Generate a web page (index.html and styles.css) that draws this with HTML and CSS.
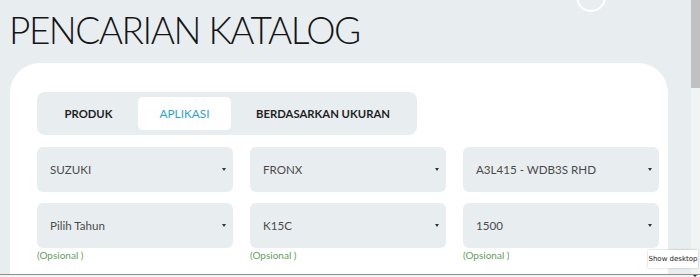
FILE: index.html
```html
<!DOCTYPE html>
<html lang="id">
<head>
<meta charset="utf-8">
<title>Pencarian Katalog</title>
<link rel="stylesheet" href="styles.css">
</head>
<body>
<div class="page">
  <span class="ring"></span>
  <h1 class="title">PENCARIAN KATALOG</h1>
  <div class="card">
    <div class="tabs">
      <div class="tab tab-1">PRODUK</div>
      <div class="tab tab-2 active">APLIKASI</div>
      <div class="tab tab-3">BERDASARKAN UKURAN</div>
    </div>
    <div class="grid">
      <div class="cell"><div class="select"><span>SUZUKI</span><i class="caret"></i></div></div>
      <div class="cell"><div class="select"><span>FRONX</span><i class="caret"></i></div></div>
      <div class="cell"><div class="select"><span>A3L415 - WDB3S RHD</span><i class="caret"></i></div></div>
      <div class="cell"><div class="select"><span>Pilih Tahun</span><i class="caret"></i></div><div class="hint">(Opsional )</div></div>
      <div class="cell"><div class="select"><span>K15C</span><i class="caret"></i></div><div class="hint">(Opsional )</div></div>
      <div class="cell"><div class="select"><span>1500</span><i class="caret"></i></div><div class="hint">(Opsional )</div></div>
    </div>
  </div>
  <div class="scrollbar"><div class="thumb"></div></div>
  <div class="taskbar"><i class="tb-arrow"></i></div>
  <div class="tooltip">Show desktop</div>
</div>
</body>
</html>
```
FILE: styles.css
```css
html, body {
  margin: 0;
  padding: 0;
  height: 100%;
  overflow: hidden;
  background: #e8eef0;
}
.page {
  position: relative;
  height: 277px;
  overflow: hidden;
  font-family: Lato, "Open Sans", sans-serif;
}
.ring {
  position: absolute;
  left: 576px;
  top: -18px;
  width: 26px;
  height: 26px;
  border: 2px solid #ffffff;
  border-radius: 50%;
}
.title {
  margin: 0 0 10px 9px;
  padding-top: 7px;
  height: 46px;
  line-height: 46px;
  font-size: 37px;
  font-weight: 300;
  color: #151515;
  letter-spacing: -1.5px;
}
.card {
  margin-left: 10px;
  width: 604px;
  height: 300px;
  background: #ffffff;
  border-radius: 30px;
  padding: 29px 27px;
}
.tabs {
  display: inline-flex;
  gap: 3px;
  padding: 5px;
  background: #e8eef0;
  border-radius: 8px;
}
.tab {
  height: 33px;
  line-height: 33px;
  text-align: center;
  font-size: 11.3px;
  font-weight: 700;
  color: #1f1f1f;
  border-radius: 5px;
}
.tab-1 { width: 93px; }
.tab-2 { width: 93px; }
.tab-3 { width: 178px; }
.tab.active {
  background: #ffffff;
  color: #2ba3d2;
  font-weight: 400;
  font-size: 11.8px;
}
.grid {
  margin-top: 12px;
  display: grid;
  grid-template-columns: 196px 196px 196px;
  column-gap: 17px;
  row-gap: 11px;
}
.select {
  height: 45px;
  background: #e8eef0;
  border-radius: 6px;
  display: flex;
  align-items: center;
  justify-content: space-between;
  padding: 0 7px 0 13px;
  font-size: 11.6px;
  color: #4a4a4a;
}
.caret {
  width: 0;
  height: 0;
  border-left: 2px solid transparent;
  border-right: 2px solid transparent;
  border-top: 3px solid #333;
}
.hint {
  margin-top: 1px;
  font-size: 10px;
  color: #649e5c;
  line-height: 12px;
}
.scrollbar {
  position: absolute;
  top: 0;
  right: 0;
  width: 9px;
  height: 274px;
  background: #f2f3f3;
}
.thumb {
  height: 88px;
  background: #c1c1c1;
}
.taskbar {
  position: absolute;
  left: 0;
  right: 0;
  bottom: 0;
  height: 2px;
  border-top: 1px solid #8e8e8e;
  background: #f4f4f4;
}
.tb-arrow {
  position: absolute;
  right: 3px;
  bottom: 0;
  width: 0;
  height: 0;
  border-left: 2px solid transparent;
  border-right: 2px solid transparent;
  border-top: 2px solid #333;
}
.tooltip {
  position: absolute;
  left: 648px;
  top: 250px;
  width: 50px;
  height: 18px;
  line-height: 18px;
  text-align: center;
  background: #ffffff;
  box-shadow: 0 0 2px rgba(0,0,0,0.25);
  font-family: "DejaVu Sans", sans-serif;
  font-size: 7px;
  color: #222;
}
```
